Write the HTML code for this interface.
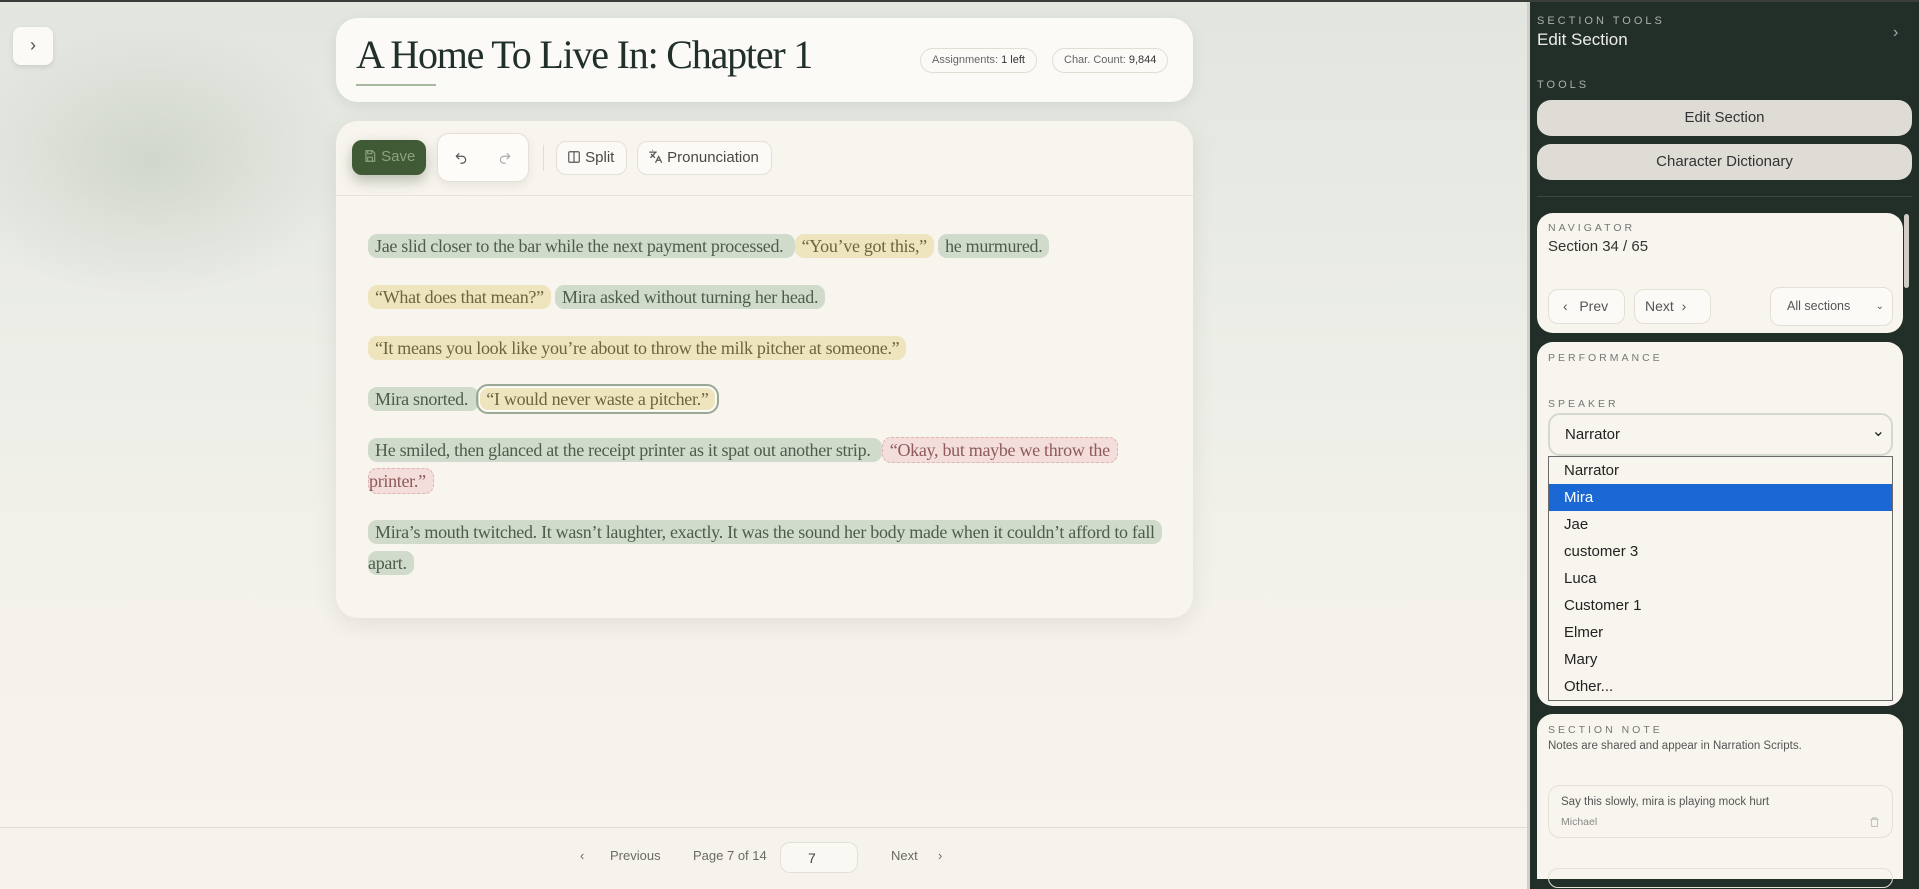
<!DOCTYPE html>
<html><head><meta charset="utf-8"><style>
*{box-sizing:border-box;margin:0;padding:0}
body{width:1919px;height:889px;overflow:hidden;position:relative;font-family:"Liberation Sans",sans-serif;
background:radial-gradient(ellipse 200px 140px at 150px 160px,rgba(170,180,165,.35),transparent),linear-gradient(180deg,#e2e6df 0%,#eceee7 40%,#f4f2ea 70%,#f7f4ed 100%);}
.topline{position:absolute;left:0;top:0;width:1919px;height:2px;background:#3a3d3a}
.collapse{position:absolute;left:13px;top:27px;width:40px;height:38px;background:#fbfaf6;border-radius:8px;box-shadow:0 2px 6px rgba(0,0,0,.1);color:#555;font-size:18px;text-align:center;line-height:36px}
.hdr{position:absolute;left:336px;top:18px;width:857px;height:84px;background:#fbfaf6;border-radius:22px;box-shadow:0 4px 14px rgba(0,0,0,.08)}
.title{position:absolute;left:20px;top:13px;font-family:"Liberation Serif",serif;font-size:40px;color:#22302a;letter-spacing:-1.2px;white-space:nowrap}
.uline{position:absolute;left:20px;top:66px;width:80px;height:2px;background:#a9b8a2}
.chip{position:absolute;top:30px;height:25px;border:1px solid #e2ded4;border-radius:13px;font-size:11px;color:#666;line-height:23px;padding:0 11px;white-space:nowrap;background:#fbfaf6}
.chip b{font-weight:normal;color:#333}
.ed{position:absolute;left:336px;top:121px;width:857px;height:497px;background:#f8f5ee;border-radius:22px;box-shadow:0 6px 24px rgba(0,0,0,.08)}
.tb{position:absolute;left:0;top:0;width:857px;height:75px;border-bottom:1px solid #e9e4da}
.btn{position:absolute;height:34px;border:1px solid #e4e0d6;border-radius:10px;background:#fbfaf6;font-size:15px;color:#4a4a44;line-height:32px;white-space:nowrap}
.txt{position:absolute;left:32px;top:110px;font-family:"Liberation Serif",serif;font-size:18px;line-height:31px;letter-spacing:-.3px;white-space:nowrap}
.txt p{margin-bottom:20px}
.g,.y,.r{padding:2px 7px;border-radius:9px}
.g{background:#d1dbcc;color:#4d5c4c}
.y{background:#eee5bf;color:#6e653f}
.r{background:#f3dedb;color:#8e5a5a;border:1px dashed #deb5b0}
.sel{outline:2px solid #9aa897;outline-offset:1px;box-shadow:0 0 0 1px #fff inset}
.foot{position:absolute;left:0;top:827px;width:1527px;height:62px;background:#f6f3ec;border-top:1px solid #e2ded5;font-size:13px;color:#6a6a62}
.foot span{position:absolute;top:20px}
.side{position:absolute;left:1527px;top:2px;width:392px;height:887px;background:#222f28;border-left:3px solid #cfcfca}
.lab{position:absolute;font-size:11px;letter-spacing:3px;color:#aab2a8}
.sbtn{position:absolute;left:7px;width:375px;height:36px;background:#dfdcd6;border-radius:14px;text-align:center;line-height:36px;font-size:15px;color:#333}
.card{position:absolute;left:7px;width:366px;background:#f8f5ee;border-radius:16px}
.clab{position:absolute;left:11px;font-size:10.5px;letter-spacing:3px;color:#777}
.dd div{height:27px;line-height:27px;padding-left:15px;font-size:15px;color:#222}
</style></head><body>
<div class="topline"></div>
<div class="collapse">›</div>
<div class="hdr">
 <div class="title">A Home To Live In: Chapter 1</div>
 <div class="uline"></div>
 <div class="chip" style="left:584px">Assignments: <b>1 left</b></div>
 <div class="chip" style="left:716px">Char. Count: <b>9,844</b></div>
</div>
<div class="ed">
 <div class="tb">
  <div class="btn" style="left:16px;top:19px;width:74px;height:35px;background:#3f5a34;border-color:#3f5a34;color:#8fa283;box-shadow:0 6px 14px rgba(40,60,30,.3);padding-left:10px">
   <svg width="14" height="14" viewBox="0 0 24 24" fill="none" stroke="#8fa283" stroke-width="2" style="vertical-align:-2px"><path d="M5 3h11l4 4v14H5z"/><path d="M8 3v5h7V3M8 21v-7h8v7"/></svg> Save</div>
  <div class="btn" style="left:101px;top:12px;width:92px;height:49px;background:#fdfcf9;border-radius:12px;box-shadow:0 4px 10px rgba(0,0,0,.07)">
   <svg style="position:absolute;left:16px;top:17px" width="14" height="14" viewBox="0 0 24 24" fill="none" stroke="#555" stroke-width="2"><path d="M9 14 4 9l5-5"/><path d="M4 9h10a6 6 0 0 1 0 12h-3"/></svg>
   <svg style="position:absolute;left:60px;top:17px" width="14" height="14" viewBox="0 0 24 24" fill="none" stroke="#aaa" stroke-width="2"><path d="m15 14 5-5-5-5"/><path d="M20 9H10a6 6 0 0 0 0 12h3"/></svg>
  </div>
  <div style="position:absolute;left:207px;top:24px;width:1px;height:26px;background:#e2ddd3"></div>
  <div class="btn" style="left:220px;top:20px;width:71px;padding-left:10px"><svg width="14" height="14" viewBox="0 0 24 24" fill="none" stroke="#555" stroke-width="2" style="vertical-align:-2px"><rect x="3" y="3" width="18" height="18" rx="2"/><path d="M12 3v18"/></svg> Split</div>
  <div class="btn" style="left:301px;top:20px;width:135px;padding-left:10px"><svg width="15" height="15" viewBox="0 0 24 24" fill="none" stroke="#555" stroke-width="2" style="vertical-align:-2px"><path d="m5 8 6 6M4 14l6-6 2-3M2 5h12M7 2h1M22 22l-5-10-5 10M14 18h6"/></svg> Pronunciation</div>
 </div>
 <div class="txt">
  <p><span class="g">Jae slid closer to the bar while the next payment processed. </span> <span class="y">“You’ve got this,”</span> <span class="g"> he murmured.</span></p>
  <p><span class="y">“What does that mean?”</span> <span class="g"> Mira asked without turning her head.</span></p>
  <p><span class="y">“It means you look like you’re about to throw the milk pitcher at someone.”</span></p>
  <p><span class="g">Mira snorted. </span> <span class="y sel">“I would never waste a pitcher.”</span></p>
  <p><span class="g">He smiled, then glanced at the receipt printer as it spat out another strip. </span> <span class="r">“Okay, but maybe we throw the</span><br><span class="r" style="padding-left:0">printer.”</span></p>
  <p><span class="g">Mira’s mouth twitched. It wasn’t laughter, exactly. It was the sound her body made when it couldn’t afford to fall</span><br><span class="g" style="padding-left:0">apart.</span></p>
 </div>
</div>
<div class="foot">
 <span style="left:580px">‹</span><span style="left:610px">Previous</span>
 <span style="left:693px">Page 7 of 14</span>
 <div style="position:absolute;left:780px;top:14px;width:78px;height:31px;border:1px solid #e4e0d6;border-radius:10px;background:#faf8f3;font-size:14px;color:#444;padding:7px 0 0 27px">7</div>
 <span style="left:891px">Next</span><span style="left:938px">›</span>
</div>
<div class="side">
 <div class="lab" style="left:7px;top:13px">SECTION TOOLS</div>
 <div style="position:absolute;left:7px;top:28px;font-size:17px;color:#eeeee8">Edit Section</div>
 <div style="position:absolute;left:363px;top:22px;font-size:16px;color:#aab">›</div>
 <div class="lab" style="left:7px;top:77px">TOOLS</div>
 <div class="sbtn" style="top:98px">Edit Section</div>
 <div class="sbtn" style="top:142px">Character Dictionary</div>
 <div style="position:absolute;left:7px;top:194px;width:375px;height:1px;background:#3b4a41"></div>
 <div style="position:absolute;left:374px;top:212px;width:5px;height:74px;background:#cfccc5;border-radius:3px"></div>
 <div class="card" style="top:211px;height:120px">
  <div class="clab" style="top:9px">NAVIGATOR</div>
  <div style="position:absolute;left:11px;top:25px;font-size:15px;color:#333">Section 34 / 65</div>
  <div class="btn" style="left:11px;top:76px;width:77px;height:35px;font-size:14px;padding-left:14px;color:#555">‹ &nbsp; Prev</div>
  <div class="btn" style="left:97px;top:76px;width:77px;height:35px;font-size:14px;padding-left:10px;color:#555">Next &nbsp;›</div>
  <div class="btn" style="left:233px;top:74px;width:123px;height:39px;font-size:12.5px;padding-left:16px;line-height:37px;color:#555">All sections <span style="position:absolute;right:8px;font-size:10px">⌄</span></div>
 </div>
 <div class="card" style="top:340px;height:364px">
  <div class="clab" style="top:10px">PERFORMANCE</div>
  <div class="clab" style="top:56px">SPEAKER</div>
  <div style="position:absolute;left:11px;top:71px;width:345px;height:43px;border:2px solid #d4d9cf;border-radius:12px;background:#f8f5ee;font-size:15px;color:#222;padding:11px 0 0 15px">Narrator<span style="position:absolute;right:6px;top:6px;font-size:16px">⌄</span></div>
  <div class="dd" style="position:absolute;left:11px;top:114px;width:345px;height:245px;border:1px solid #6a6a6a;background:#f8f5ee">
   <div>Narrator</div><div style="background:#1b67d3;color:#fff">Mira</div><div>Jae</div><div>customer 3</div><div>Luca</div><div>Customer 1</div><div>Elmer</div><div>Mary</div><div>Other...</div>
  </div>
 </div>
 <div class="card" style="top:712px;height:165px;border-radius:16px 16px 0 0">
  <div class="clab" style="top:10px">SECTION NOTE</div>
  <div style="position:absolute;left:11px;top:26px;font-size:11.5px;color:#555">Notes are shared and appear in Narration Scripts.</div>
  <div style="position:absolute;left:11px;top:71px;width:345px;height:53px;border:1px solid #e4e0d6;border-radius:12px">
   <div style="position:absolute;left:12px;top:10px;font-size:11.5px;color:#555">Say this slowly, mira is playing mock hurt</div>
   <div style="position:absolute;left:12px;top:30px;font-size:10.5px;color:#888">Michael</div>
   <svg style="position:absolute;right:12px;top:30px" width="11" height="12" viewBox="0 0 24 24" fill="none" stroke="#bbb" stroke-width="2"><path d="M3 6h18M8 6V3h8v3M5 6l1 16h12l1-16"/></svg>
  </div>
  <div style="position:absolute;left:11px;top:154px;width:345px;height:20px;border:1px solid #e4e0d6;border-radius:12px"></div>
 </div>
</div>
</body></html>
